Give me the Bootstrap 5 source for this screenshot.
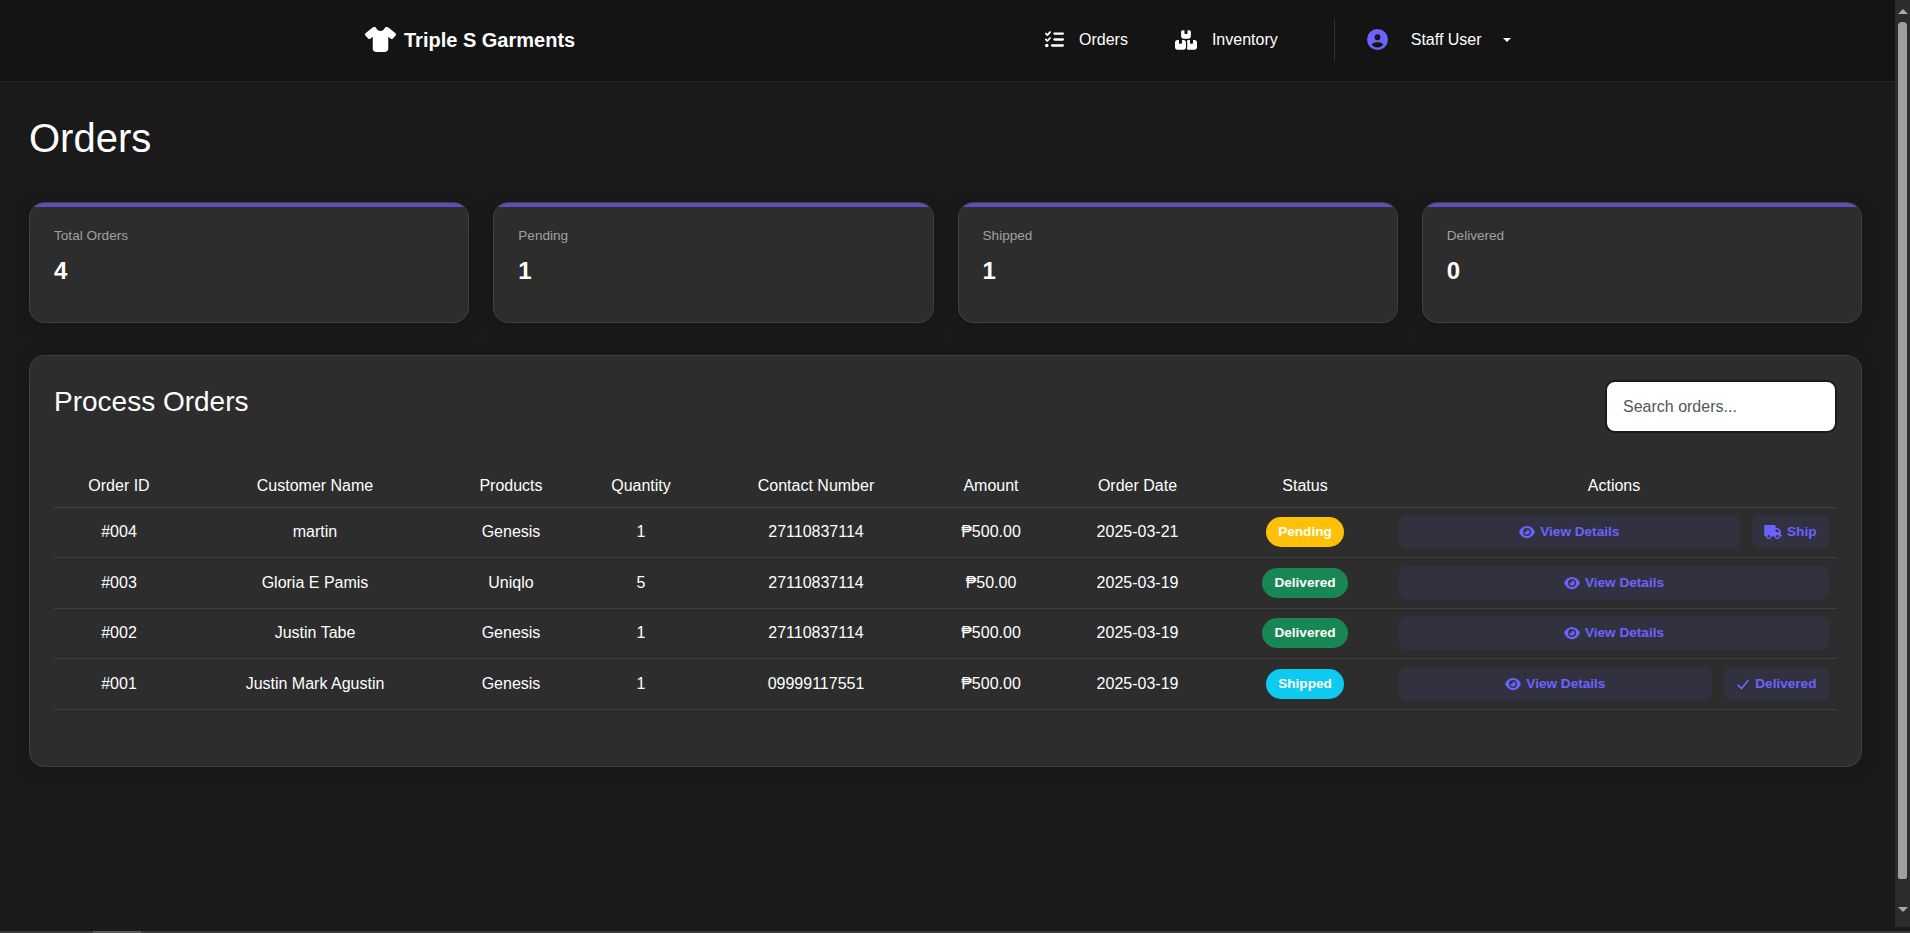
<!doctype html>
<html lang="en">
<head>
<meta charset="utf-8">
<title>Orders</title>
<link rel="stylesheet" href="https://cdn.jsdelivr.net/npm/bootstrap@5.3.0/dist/css/bootstrap.min.css">
<style>
html,body{height:100%;overflow:hidden}
body{background:#1a1a1a;color:#fff;font-family:"Liberation Sans",Arial,sans-serif;font-size:16px}
.shell{height:927px}
.main-pane{flex:1 1 auto;min-width:0}
.top-bar{height:82px;background:#141414;border-bottom:1px solid #242424;padding:0 0 2px 365px!important}
.top-brand{font-size:20px;font-weight:700;color:#fff!important;padding:0;margin:0;gap:8px;width:680px}
.top-brand svg{width:31px;height:25px;fill:#fff}
.top-link{color:#fff!important;padding:0!important;gap:15px}
.top-link svg{fill:#fff}
.ico-tasks{width:19px;height:19px}
.ico-boxes{width:22px;height:20px}
.link-orders{margin-right:47px}
.top-sep{width:1px;height:42px;background:#303030;margin:0 32px 0 56px}
.ico-user{width:21px;height:21px;fill:#6c63ff!important;margin-right:8px}
.user-caret{border-top:4.8px solid #fff;border-left:4.8px solid transparent;border-right:4.8px solid transparent;margin-left:6px;display:inline-block}
.page-body{padding:32px 33px 0 29px}
.page-title{font-size:40px;font-weight:400;line-height:48px;margin:0 0 40px}
.stat-box{background:#2d2d2d;border:1px solid #404040;border-radius:15px;overflow:hidden;box-shadow:0 4px 20px rgba(0,0,0,.2);color:#fff}
.stat-box::before{content:"";display:block;height:4px;background:#5a4fbf}
.stat-box .card-body{padding:19px 24px 33px}
.stat-label{font-size:13.6px;color:#a0a0a0;line-height:20px;margin:0 0 7px}
.stat-num{font-size:24px;font-weight:700;line-height:36px;margin:0}
.order-panel{margin-top:32px;height:412px;background:#2d2d2d;border:1px solid #404040;border-radius:15px;padding:24px;color:#fff;box-shadow:0 4px 20px rgba(0,0,0,.2)}
.panel-title{font-size:28px;font-weight:400;line-height:34px;margin:5px 0 0}
.search-box{width:232px;height:53px;border:2px solid #1a1a1a;border-radius:10px;background:#fff;padding:0 16px;font-size:16px;color:#333}
.search-box::placeholder{color:#555}
.order-table{table-layout:fixed;margin:30px 0 0;--bs-table-bg:transparent;--bs-table-color:#fff;--bs-table-border-color:#404040;color:#fff}
.order-table th{font-weight:400;height:44px;padding:2px 8px 0;vertical-align:middle}
.order-table td{padding:7.75px 8px;height:50.6px}
.c1{width:130px}.c2{width:262px}.c3{width:130px}.c4{width:130px}.c5{width:220px}.c6{width:130px}.c7{width:163px}.c8{width:172px}
.state-pill{font-size:13.6px;font-weight:700;padding:0 12px;height:30px;line-height:30px;color:#fff;display:inline-block;min-width:78px}
.pill-pending{background:#ffc107}
.pill-delivered{background:#198754}
.pill-shipped{background:#0dcaf0}
.act-btn{background:#32313f;color:#6c63ff;border:0;border-radius:8px;font-size:13.6px;font-weight:700;height:34px;padding:0 12.5px;display:inline-flex;align-items:center;justify-content:center;gap:5px;white-space:nowrap}
.act-btn:hover{background:#32313f;color:#6c63ff}
.act-btn svg{fill:#6c63ff;height:14px}
.ico-eye{width:16px}
.ico-truck{width:18px}
.ico-check{width:14px;height:14px!important;fill:none!important;stroke:#6c63ff;stroke-width:1.7}
.act-row{gap:12px}
.fake-vscroll{width:15px;background:#2c2c2c;flex:0 0 15px;padding:9px 0 15px;gap:8px}
.fake-thumb{width:9px;flex:1 1 auto;background:#9f9f9f;border-radius:4px 4px 2px 2px}
.arrow-up{border-bottom:5px solid #a8a8a8;border-left:5px solid transparent;border-right:5px solid transparent;width:0}
.arrow-down{border-top:5px solid #a8a8a8;border-left:5px solid transparent;border-right:5px solid transparent;width:0;margin-top:20px}
.fake-hscroll{height:6px;background:#3c3c3c}
.fake-hthumb{width:48px;height:2px;margin:4px 0 0 93px;background:#5c5c5c}
</style>
</head>
<body>
<svg class="d-none">
<symbol id="i-shirt" viewBox="0 0 640 512"><path d="M211.8 0c7.8 0 14.3 5.7 16.7 13.2C240.8 51.9 277.1 80 320 80s79.2-28.1 91.5-66.8C413.9 5.7 420.4 0 428.2 0h12.6c22.5 0 44.2 7.9 61.5 22.3L628.5 127.4c6.6 5.5 10.7 13.5 11.4 22.1s-2.1 17.1-7.8 23.6l-56 64c-11.4 13.1-31.2 14.6-44.6 3.5L480 197.7V448c0 35.3-28.7 64-64 64H224c-35.3 0-64-28.7-64-64V197.7l-51.5 42.9c-13.3 11.1-33.1 9.6-44.6-3.5l-56-64c-5.7-6.5-8.5-15-7.8-23.6s4.8-16.6 11.4-22.1L137.7 22.3C155 7.9 176.7 0 199.2 0h12.6z"/></symbol>
<symbol id="i-tasks" viewBox="0 0 512 512"><path d="M152.1 38.2c9.9 8.9 10.7 24 1.8 33.9l-72 80c-4.4 4.9-10.6 7.8-17.2 7.9s-12.9-2.4-17.6-7L7 113C-2.3 103.6-2.3 88.4 7 79s24.6-9.4 33.9 0l22.1 22.1 55.1-61.2c8.9-9.9 24-10.7 33.9-1.8zm0 160c9.9 8.9 10.7 24 1.8 33.9l-72 80c-4.4 4.9-10.6 7.8-17.2 7.9s-12.9-2.4-17.6-7L7 273c-9.4-9.4-9.4-24.6 0-33.9s24.6-9.4 33.9 0l22.1 22.1 55.1-61.2c8.9-9.9 24-10.7 33.9-1.8zM224 96c0-17.7 14.3-32 32-32H480c17.7 0 32 14.3 32 32s-14.3 32-32 32H256c-17.7 0-32-14.3-32-32zm0 160c0-17.7 14.3-32 32-32H480c17.7 0 32 14.3 32 32s-14.3 32-32 32H256c-17.7 0-32-14.3-32-32zM160 416c0-17.7 14.3-32 32-32H480c17.7 0 32 14.3 32 32s-14.3 32-32 32H192c-17.7 0-32-14.3-32-32zM48 368a48 48 0 1 1 0 96 48 48 0 1 1 0-96z"/></symbol>
<symbol id="i-boxes" viewBox="0 0 576 512"><path d="M248 0H208c-26.5 0-48 21.5-48 48V160c0 35.3 28.7 64 64 64H352c35.3 0 64-28.7 64-64V48c0-26.5-21.5-48-48-48H328V80c0 8.8-7.2 16-16 16H264c-8.8 0-16-7.2-16-16V0zM64 256c-35.3 0-64 28.7-64 64V448c0 35.3 28.7 64 64 64H224c35.3 0 64-28.7 64-64V320c0-35.3-28.7-64-64-64H184v80c0 8.8-7.2 16-16 16H120c-8.8 0-16-7.2-16-16V256H64zM352 512H512c35.3 0 64-28.7 64-64V320c0-35.3-28.7-64-64-64H472v80c0 8.8-7.2 16-16 16H408c-8.8 0-16-7.2-16-16V256H352c-15 0-28.8 5.2-39.6 13.9c4.9 15.1 7.6 31.2 7.6 48.1V448c0 16.9-2.7 33-7.6 48.1c10.8 8.7 24.6 13.9 39.6 13.9z"/></symbol>
<symbol id="i-user" viewBox="0 0 512 512"><path d="M399 384.2C376.9 345.8 335.4 320 288 320H224c-47.4 0-88.9 25.8-111 64.2c35.2 39.2 86.2 63.8 143 63.8s107.8-24.7 143-63.8zM0 256a256 256 0 1 1 512 0A256 256 0 1 1 0 256zm256 16a72 72 0 1 0 0-144 72 72 0 1 0 0 144z"/></symbol>
<symbol id="i-eye" viewBox="0 0 576 512"><path d="M288 32c-80.8 0-145.5 36.8-192.6 80.6C48.6 156 17.3 208 2.5 243.7c-3.3 7.9-3.3 16.7 0 24.6C17.3 304 48.6 356 95.4 399.4C142.5 443.2 207.2 480 288 480s145.5-36.8 192.6-80.6c46.8-43.5 78.1-95.4 93-131.1c3.3-7.9 3.3-16.7 0-24.6c-14.9-35.7-46.2-87.7-93-131.1C433.5 68.8 368.8 32 288 32zM144 256a144 144 0 1 1 288 0 144 144 0 1 1 -288 0zm144-64c0 35.3-28.7 64-64 64c-7.1 0-13.9-1.2-20.3-3.3c-5.5-1.8-11.9 1.6-11.7 7.4c.3 6.9 1.3 13.8 3.2 20.7c13.7 51.2 66.4 81.6 117.6 67.9s81.6-66.4 67.9-117.6c-11.1-41.5-47.8-69.4-88.6-71.1c-5.8-.2-9.2 6.1-7.4 11.7c2.1 6.4 3.3 13.2 3.3 20.3z"/></symbol>
<symbol id="i-truck" viewBox="0 0 640 512"><path d="M48 0C21.5 0 0 21.5 0 48V368c0 26.5 21.5 48 48 48H64c0 53 43 96 96 96s96-43 96-96H384c0 53 43 96 96 96s96-43 96-96h32c17.7 0 32-14.3 32-32s-14.3-32-32-32V288 256 237.3c0-17-6.7-33.3-18.7-45.3L512 114.7c-12-12-28.3-18.7-45.3-18.7H416V48c0-26.5-21.5-48-48-48H48zM416 160h50.7L544 237.3V256H416V160zM112 416a48 48 0 1 1 96 0 48 48 0 1 1 -96 0zm368-48a48 48 0 1 1 0 96 48 48 0 1 1 0-96z"/></symbol>
</svg>
<div class="shell d-flex">
  <div class="main-pane">
    <nav class="navbar navbar-dark top-bar flex-nowrap justify-content-start">
      <a class="navbar-brand top-brand d-flex align-items-center" href="#"><svg><use href="#i-shirt"/></svg>Triple S Garments</a>
      <div class="navbar-nav flex-row align-items-center">
        <a class="nav-link top-link link-orders d-flex align-items-center" href="#"><svg class="ico-tasks"><use href="#i-tasks"/></svg>Orders</a>
        <a class="nav-link top-link d-flex align-items-center" href="#"><svg class="ico-boxes"><use href="#i-boxes"/></svg>Inventory</a>
        <div class="top-sep"></div>
        <a class="nav-link top-link d-flex align-items-center" href="#"><svg class="ico-user"><use href="#i-user"/></svg>Staff User<span class="user-caret"></span></a>
      </div>
    </nav>
    <main class="page-body">
      <h1 class="page-title">Orders</h1>
      <div class="row g-4">
        <div class="col-3"><div class="card stat-box"><div class="card-body"><p class="stat-label">Total Orders</p><p class="stat-num">4</p></div></div></div>
        <div class="col-3"><div class="card stat-box"><div class="card-body"><p class="stat-label">Pending</p><p class="stat-num">1</p></div></div></div>
        <div class="col-3"><div class="card stat-box"><div class="card-body"><p class="stat-label">Shipped</p><p class="stat-num">1</p></div></div></div>
        <div class="col-3"><div class="card stat-box"><div class="card-body"><p class="stat-label">Delivered</p><p class="stat-num">0</p></div></div></div>
      </div>
      <section class="order-panel">
        <div class="d-flex justify-content-between align-items-start">
          <h3 class="panel-title">Process Orders</h3>
          <input class="form-control search-box" type="text" placeholder="Search orders...">
        </div>
        <table class="table order-table text-center align-middle">
          <colgroup><col class="c1"><col class="c2"><col class="c3"><col class="c4"><col class="c5"><col class="c6"><col class="c7"><col class="c8"><col></colgroup>
          <thead><tr><th>Order ID</th><th>Customer Name</th><th>Products</th><th>Quantity</th><th>Contact Number</th><th>Amount</th><th>Order Date</th><th>Status</th><th>Actions</th></tr></thead>
          <tbody>
            <tr><td>#004</td><td>martin</td><td>Genesis</td><td>1</td><td>27110837114</td><td>₱500.00</td><td>2025-03-21</td><td><span class="badge rounded-pill state-pill pill-pending">Pending</span></td>
              <td><div class="d-flex act-row"><a class="btn act-btn flex-grow-1" href="#"><svg class="ico-eye"><use href="#i-eye"/></svg>View Details</a><a class="btn act-btn" href="#"><svg class="ico-truck"><use href="#i-truck"/></svg>Ship</a></div></td></tr>
            <tr><td>#003</td><td>Gloria E Pamis</td><td>Uniqlo</td><td>5</td><td>27110837114</td><td>₱50.00</td><td>2025-03-19</td><td><span class="badge rounded-pill state-pill pill-delivered">Delivered</span></td>
              <td><div class="d-flex act-row"><a class="btn act-btn flex-grow-1" href="#"><svg class="ico-eye"><use href="#i-eye"/></svg>View Details</a></div></td></tr>
            <tr><td>#002</td><td>Justin Tabe</td><td>Genesis</td><td>1</td><td>27110837114</td><td>₱500.00</td><td>2025-03-19</td><td><span class="badge rounded-pill state-pill pill-delivered">Delivered</span></td>
              <td><div class="d-flex act-row"><a class="btn act-btn flex-grow-1" href="#"><svg class="ico-eye"><use href="#i-eye"/></svg>View Details</a></div></td></tr>
            <tr><td>#001</td><td>Justin Mark Agustin</td><td>Genesis</td><td>1</td><td>09999117551</td><td>₱500.00</td><td>2025-03-19</td><td><span class="badge rounded-pill state-pill pill-shipped">Shipped</span></td>
              <td><div class="d-flex act-row"><a class="btn act-btn flex-grow-1" href="#"><svg class="ico-eye"><use href="#i-eye"/></svg>View Details</a><a class="btn act-btn" href="#"><svg class="ico-check" viewBox="0 0 14 14"><polyline points="1.5,7.5 5.5,11.5 12.5,3"/></svg>Delivered</a></div></td></tr>
          </tbody>
        </table>
      </section>
    </main>
  </div>
  <div class="fake-vscroll d-flex flex-column align-items-center"><div class="arrow-up"></div><div class="fake-thumb"></div><div class="arrow-down"></div></div>
</div>
<div class="fake-hscroll"><div class="fake-hthumb"></div></div>
<script src="https://cdn.jsdelivr.net/npm/bootstrap@5.3.0/dist/js/bootstrap.bundle.min.js"></script>
</body>
</html>
